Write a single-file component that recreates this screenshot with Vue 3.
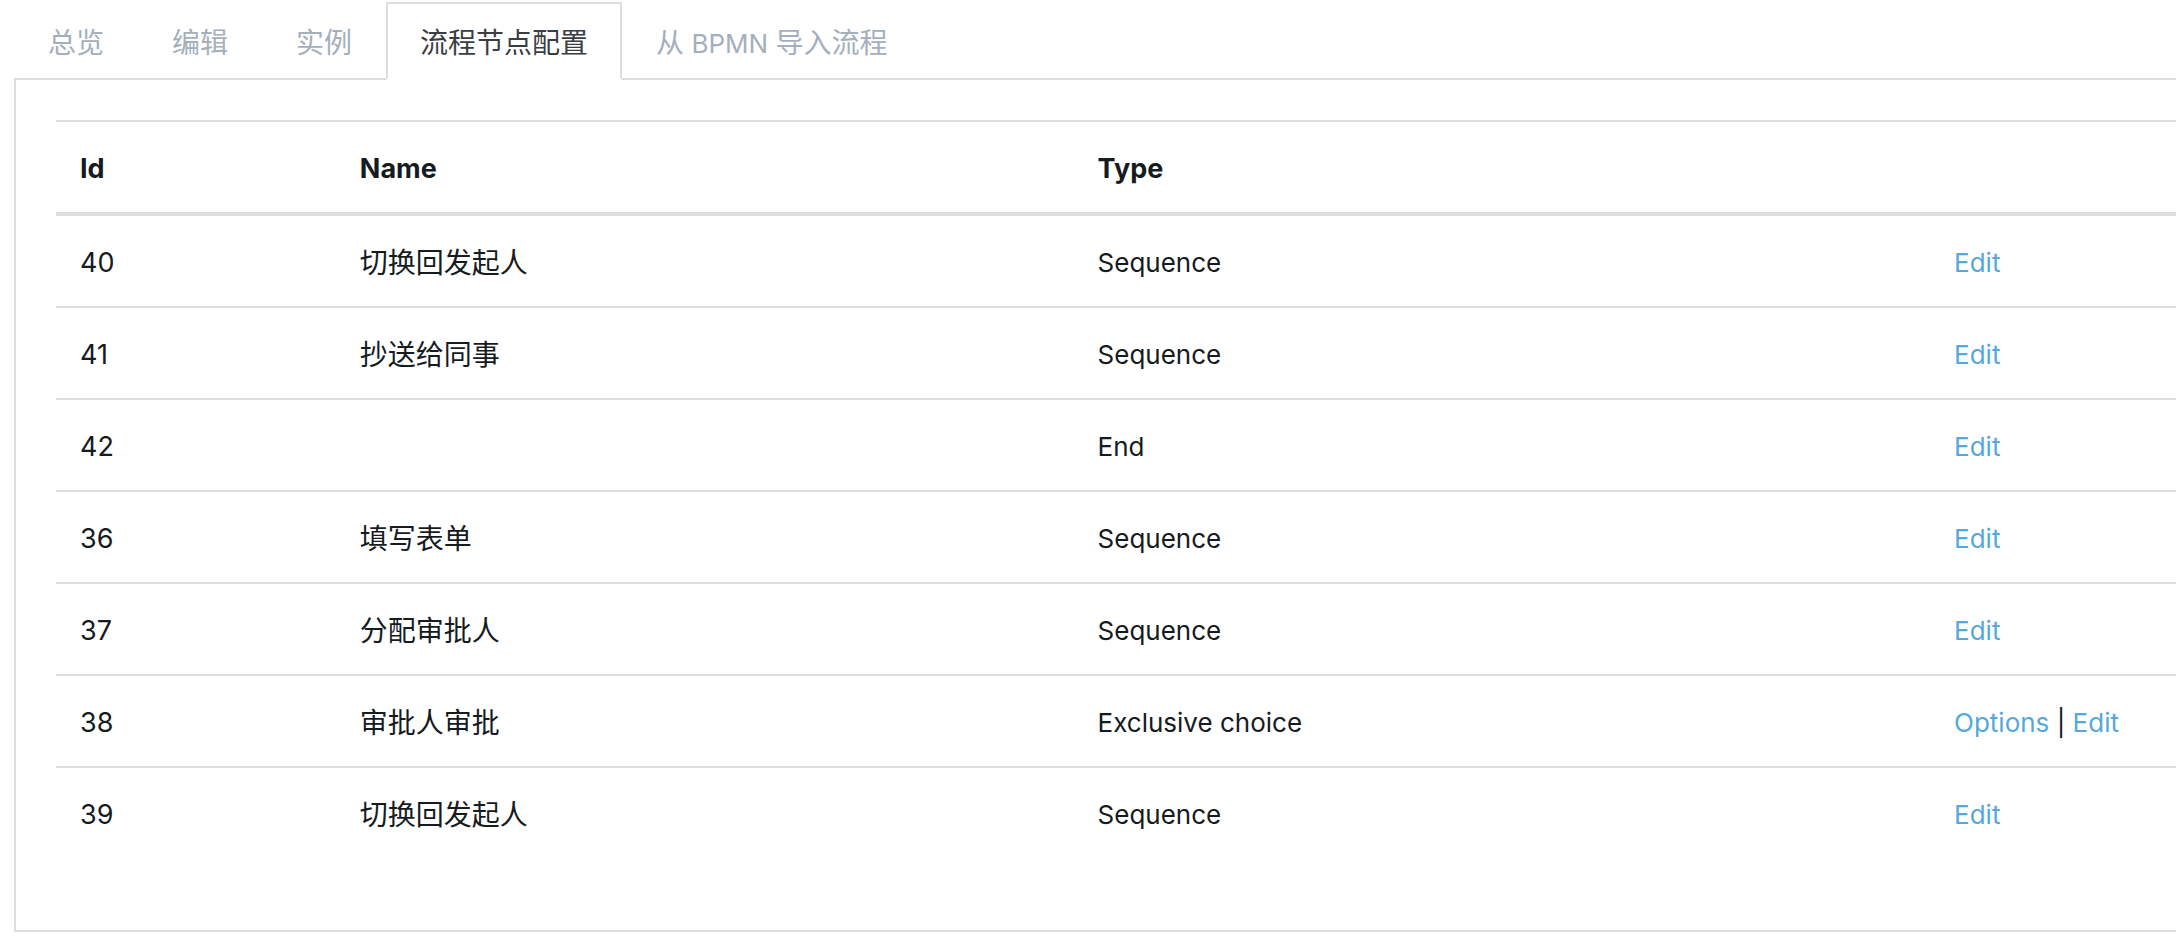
<script setup>
import { ref } from 'vue'

const tabs = [
  [{ text: '总览' }],
  [{ text: '编辑' }],
  [{ text: '实例' }],
  [{ text: '流程节点配置' }],
  [{ text: '从' }, { text: ' BPMN ', latin: true }, { text: '导入流程' }],
]
const active = ref(3)

const rows = [
  { id: 40, name: '切换回发起人', type: 'Sequence', actions: ['Edit'] },
  { id: 41, name: '抄送给同事', type: 'Sequence', actions: ['Edit'] },
  { id: 42, name: '', type: 'End', actions: ['Edit'] },
  { id: 36, name: '填写表单', type: 'Sequence', actions: ['Edit'] },
  { id: 37, name: '分配审批人', type: 'Sequence', actions: ['Edit'] },
  { id: 38, name: '审批人审批', type: 'Exclusive choice', actions: ['Options', 'Edit'] },
  { id: 39, name: '切换回发起人', type: 'Sequence', actions: ['Edit'] },
]
</script>

<template>
  <main class="page">
    <nav class="tabs">
      <a
        v-for="(tab, i) in tabs"
        :key="i"
        href="#"
        class="tab"
        :class="{ active: i === active }"
        @click.prevent="active = i"
      ><span v-for="part in tab" :key="part.text" :class="{ latin: part.latin }">{{ part.text }}</span></a>
    </nav>
    <section class="panel">
      <table class="table">
        <colgroup>
          <col class="col-id" />
          <col class="col-name" />
          <col class="col-type" />
          <col />
        </colgroup>
        <thead>
          <tr>
            <th scope="col">Id</th>
            <th scope="col">Name</th>
            <th scope="col">Type</th>
            <th></th>
          </tr>
        </thead>
        <tbody>
          <tr v-for="row in rows" :key="row.id">
            <td class="number">{{ row.id }}</td>
            <td>{{ row.name }}</td>
            <td class="latin">{{ row.type }}</td>
            <td class="latin">
              <template v-for="(action, i) in row.actions" :key="action">
                <template v-if="i > 0">&nbsp;|&nbsp;</template><a href="#" class="link">{{ action }}</a>
              </template>
            </td>
          </tr>
        </tbody>
      </table>
    </section>
  </main>
</template>

<style>
body {
  background: #fff;
}
</style>

<style scoped>
.page {
  padding: 2px 0 8px 14px;
  overflow: hidden;
  color: #151b1e;
  font-family: Inter, "Noto Sans CJK SC", sans-serif;
  font-size: 28px;
  line-height: 42px;
}
.tabs {
  display: flex;
  position: relative;
}
.tab {
  padding: 18px 32px 14px;
  border: 2px solid transparent;
  color: #a4afbd;
  text-decoration: none;
  white-space: pre;
}
.tab.active {
  border-color: #ddd;
  border-bottom-color: #fff;
  background: #fff;
  color: #3a3d42;
}
.panel {
  margin-top: -2px;
  padding: 40px 0 72px 40px;
  border: 2px solid #ddd;
  border-right: 0;
}
.table {
  width: 100%;
  border-collapse: separate;
  border-spacing: 0;
  table-layout: fixed;
}
.col-id {
  width: 13.2%;
}
.col-name {
  width: 34.8%;
}
.col-type {
  width: 40.4%;
}
th,
td {
  height: 42px;
  padding: 26px 24px 22px;
  text-align: left;
  white-space: nowrap;
}
th {
  border-top: 2px solid #ddd;
  border-bottom: 4px solid #ddd;
  font-size: 27px;
  font-weight: 700;
}
td {
  border-bottom: 2px solid #ddd;
}
tbody tr:last-child td {
  border-bottom: 0;
}
.number {
  font-size: 27px;
}
.latin {
  font-size: 26px;
  line-height: 40px;
}
.link {
  color: #55a8dd;
  text-decoration: none;
}
</style>
